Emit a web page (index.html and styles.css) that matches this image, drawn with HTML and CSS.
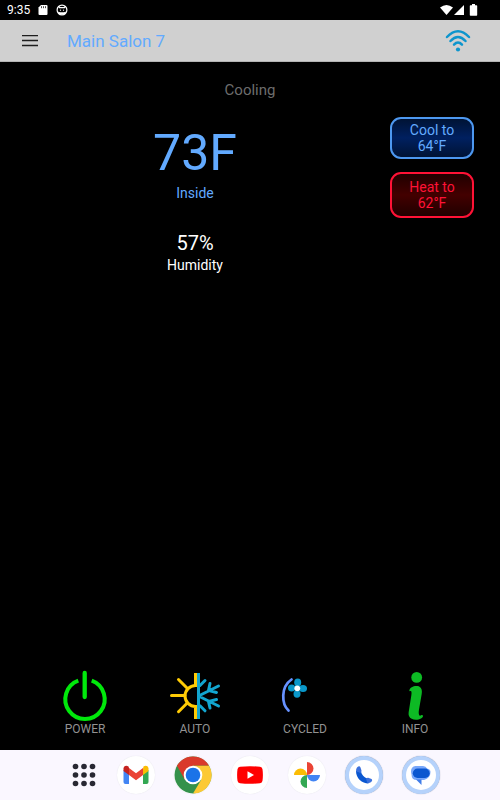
FILE: index.html
```html
<!DOCTYPE html>
<html lang="en">
<head>
<meta charset="utf-8">
<meta name="viewport" content="width=device-width, initial-scale=1">
<title>Main Salon 7</title>
<link rel="stylesheet" href="styles.css">
</head>
<body>
<div class="status">
  <span class="clock">9:35</span>
  <svg width="10" height="12" viewBox="0 0 10 12" aria-hidden="true"><path d="M3 1h5.500q1 0 1 1v8q0 1-1 1h-7q-1 0-1-1V3.500z" fill="#fff"/><path d="M3.500 2.200v2M5.500 2.200v2M7.500 2.200v2" stroke="#000" stroke-width=".7"/></svg>
  <svg width="12" height="12" viewBox="0 0 12 12" aria-hidden="true"><circle cx="6" cy="6" r="4.900" fill="#000" stroke="#fff" stroke-width="1.200"/><path d="M2.500 2L4.500 3h3l2-1-.5 2.200H3zM1.500 7.500L4 8.300h4l2.500-.8L8.500 10.500h-5z" fill="#fff"/><circle cx="4.500" cy="6.200" r=".6" fill="#fff"/><circle cx="7.500" cy="6.200" r=".6" fill="#fff"/></svg>
  <svg class="system" width="38" height="12" viewBox="0 0 38 12" aria-hidden="true" fill="#fff"><path d="M0 3.500Q6.500-1.500 13 3.500L6.500 11z"/><path d="M24 1v10H14z"/><path d="M32 0h3v1.300h1.500q.7 0 .7.700v9q0 .8-.7.800h-6q-.7 0-.7-.8V2q0-.7.700-.7H32z"/></svg>
</div>
<header class="bar">
  <button class="icon-button" aria-label="Menu"><svg width="16" height="12" viewBox="0 0 16 12"><path d="M0 .6h16M0 5.500h16M0 10.500h16" stroke="#1d1d1d" stroke-width="1.300"/></svg></button>
  <h1>Main Salon 7</h1>
  <button class="icon-button network" aria-label="Network"><svg width="28" height="24" viewBox="0 0 28 24" fill="none" stroke="#0d95cd" stroke-width="2.500" stroke-linecap="round"><path d="M3 8Q14-3.500 25 8M6.500 12Q14 4 21.500 12M10 15.700Q14 11.500 18 15.700"/><circle cx="14" cy="20.500" r="2.100" fill="#0d95cd" stroke="none"/></svg></button>
</header>
<main>
  <p class="mode">Cooling</p>
  <div class="climate">
    <section class="readings">
      <p class="temperature">73F</p>
      <p class="inside">Inside</p>
      <p class="humidity">57%</p>
      <p class="caption">Humidity</p>
    </section>
    <div class="targets">
      <button class="target cool">Cool to<br>64°F</button>
      <button class="target heat">Heat to<br>62°F</button>
    </div>
  </div>
</main>
<nav class="controls">
  <button><svg width="56" height="56" viewBox="0 0 56 56" fill="none" stroke="#00e80b"><path d="M21.300 12.700a19.700 19.700 0 1 0 13.400 0" stroke-width="4"/><path d="M27.700 5v24" stroke-width="4.300" stroke-linecap="round"/></svg>POWER</button>
  <button><svg width="56" height="56" viewBox="0 0 56 56" fill="none" stroke-width="3"><g stroke="#ffcb05"><path d="M28.500 5v12.500A10.500 10.500 0 0 0 28.500 38.500V51"/><path d="M4.500 27.600H18M11.500 11.500l8.500 8.500M11.500 43.700L20 35.200" stroke-linecap="round"/></g><g stroke="#12a5cf"><path d="M31.500 5v46"/><path d="M31.500 28L51.500 18M31.500 28l20 10M33 17.500l5-5M33 37.800l5 5M43 15.500L41.500 22.500 49.500 24.500M43 40L41.500 33.500 49.500 31.500" stroke-linecap="round"/></g></svg>AUTO</button>
  <button><svg width="56" height="56" viewBox="0 0 56 56"><path d="M14.500 11.500C3.500 19 4.500 36 11.500 42.500" fill="none" stroke="#6792ff" stroke-width="2.700" stroke-linecap="round"/><g fill="#0997c9"><ellipse cx="20.700" cy="14.500" rx="3.500" ry="4"/><ellipse cx="26" cy="20.500" rx="4" ry="3.500"/><ellipse cx="20" cy="26" rx="3.500" ry="3.700"/><ellipse cx="14.700" cy="20" rx="3.700" ry="3.500"/></g><circle cx="20.300" cy="20.300" r="2.900" fill="#fff"/></svg>CYCLED</button>
  <button><svg width="56" height="56" viewBox="0 0 56 56" fill="#0dba24"><circle cx="29.700" cy="9.400" r="5.400"/><path d="M22.300 22.500C23 19 27 17.500 30.500 18c3.700.6 5 4 4.200 8L32 41.500c-.7 3.500-.2 6 1 6.300 1.200 0 1.300-1 2.500-.6 1.300.5.200 2.200-1.500 3.300-4 2.200-10.500 1.500-12-2.500-.8-2-.2-4.500.1-6.500l2.200-14c.5-2.700.2-4.500-.5-4.500-.7 0-1.300.6-1.500-.5z"/></svg>INFO</button>
</nav>
<footer class="dock">
  <a href="#" class="app grid" aria-label="All apps"><svg width="24" height="24" viewBox="0 0 24 24" fill="#282833"><circle cx="3.500" cy="3.500" r="2.800"/><circle cx="12" cy="3.500" r="2.800"/><circle cx="20.500" cy="3.500" r="2.800"/><circle cx="3.500" cy="12" r="2.800"/><circle cx="12" cy="12" r="2.800"/><circle cx="20.500" cy="12" r="2.800"/><circle cx="3.500" cy="20.500" r="2.800"/><circle cx="12" cy="20.500" r="2.800"/><circle cx="20.500" cy="20.500" r="2.800"/></svg></a>
  <a href="#" class="app" aria-label="Gmail"><svg width="26" height="20" viewBox="0 0 26 20"><path d="M.5 5v12q0 2 2 2H6V9z" fill="#4285f4"/><path d="M20 9v10h3.500q2 0 2-2V5z" fill="#34a853"/><path d="M20 3.500V10l5.500-4V3.500C25.500.7 22.500-.2 20.500 1.500z" fill="#fbbc04"/><path d="M6 10V3l7 5.200L20 3v7l-7 5.200z" fill="#ea4335"/><path d="M.5 3.500V6L6 10V3L5.500 1.500C3.500-.2.5.7.5 3.500z" fill="#c5221f"/></svg></a>
  <a href="#" class="app" aria-label="Chrome"><svg width="38" height="38" viewBox="0 0 38 38"><circle cx="19" cy="19" r="18.500" fill="#34914b"/><path d="M19 9.500h15.900A18.500 18.500 0 0 1 19 37.500l8.200-13.750z" fill="#fcc934"/><path d="M3 9.700A18.500 18.500 0 0 1 34.900 9.500H19L10.800 23.700z" fill="#d93a2b"/><circle cx="19" cy="19" r="9.300" fill="#fff"/><circle cx="19" cy="19" r="7.300" fill="#1a73e8"/></svg></a>
  <a href="#" class="app" aria-label="YouTube"><svg width="26" height="18" viewBox="0 0 26 18"><path d="M3 .7Q13-.3 23 .7q2.200.2 2.500 2.500.8 5.800 0 11.600-.3 2.300-2.500 2.500-10 1-20 0-2.200-.2-2.500-2.500-.8-5.800 0-11.600Q.8.900 3 .7z" fill="red"/><path d="M10.500 5.300v7.400L17 9z" fill="#fff"/></svg></a>
  <a href="#" class="app" aria-label="Photos"><svg width="28" height="28" viewBox="0 0 28 28"><path d="M14 1a6.500 6.500 0 0 1 0 13z" fill="#ea4335"/><path d="M27 14a6.500 6.500 0 0 1-13 0z" fill="#4285f4"/><path d="M14 27a6.500 6.500 0 0 1 0-13z" fill="#34a853"/><path d="M1 14a6.500 6.500 0 0 1 13 0z" fill="#fbbc04"/></svg></a>
  <a href="#" class="app ringed" aria-label="Phone"><svg width="20" height="20" viewBox="0 0 20 20"><path d="M2 6L7 6.500C7.500 9.500 10 12.500 13.500 13.500L14.500 18.500C8 18.500 2 13.500 2 6z" fill="#0b57d0"/><path d="M3.500 2c1.200-1 2.500-.8 3 .5l.9 2.800c.3 1-.2 2-1.200 2.800L2.100 6C2 4.300 2.500 2.800 3.500 2zM12 13.800c1-1 1.800-1.100 2.800-.8l2.200.8c1.400.6 1.500 1.800.6 2.800-1 1.100-2.400 1.600-4.100 1.600z" fill="#3a70dd"/></svg></a>
  <a href="#" class="app ringed" aria-label="Messages"><svg width="22" height="20" viewBox="0 0 22 20"><path d="M5.500 1H13q3 0 4 2.500 3.500.5 3.500 3.500 0 6-6.500 8H7Q1.500 15 1.500 9.500-.5 2 5.500 1z" fill="#78a7fa"/><path d="M6 14.500h5.500V20z" fill="#3f7ce8"/><path d="M7.500 3.500H15a4.700 4.700 0 0 1 0 9.400H7.500a4.700 4.700 0 0 1 0-9.400z" fill="#0b57d0"/></svg></a>
</footer>
</body>
</html>
```
FILE: styles.css
```css
* {
  box-sizing: border-box;
}

body {
  margin: 0;
  min-height: 100vh;
  display: flex;
  flex-direction: column;
  background: #000;
  color: #fff;
  font: 14px/16px Roboto, sans-serif;
}

h1,
p {
  margin: 0;
  font-weight: 400;
}

button {
  margin: 0;
  padding: 0;
  border: 0;
  background: none;
  color: inherit;
  font: inherit;
  cursor: pointer;
}

svg {
  display: block;
}

.status {
  height: 20px;
  display: flex;
  align-items: center;
  gap: 8px;
  padding: 0 22px 0 7px;
  font-size: 12px;
}

.system {
  margin-left: auto;
}

.bar {
  height: 42px;
  display: flex;
  align-items: center;
  padding: 0 28px 0 20px;
  background: #d0d0d0;
  border-bottom: 1px solid #b4b4b4;
}

.icon-button {
  padding: 2px;
}

.bar h1 {
  margin-left: 27px;
  color: #62aaff;
  font-size: 17px;
  line-height: 20px;
}

.network {
  margin-left: auto;
  padding: 0;
}

main {
  flex: 1;
}

.mode {
  padding-top: 18px;
  color: #6d6d6d;
  font-size: 15px;
  line-height: 20px;
  text-align: center;
}

.climate {
  display: flex;
  padding: 17px 26px 0 0;
}

.readings {
  flex: 1;
  text-align: center;
}

.temperature {
  padding-top: 6px;
  color: #62aaff;
  font-size: 50px;
  line-height: 60px;
}

.inside,
.caption {
  line-height: 20px;
}

.inside {
  color: #62aaff;
}

.humidity {
  padding-top: 28px;
  font-size: 20px;
  line-height: 24px;
}

.targets {
  display: flex;
  flex-direction: column;
  gap: 13px;
  width: 84px;
}

.target {
  padding: 3px 0;
  border: 2px solid;
  border-radius: 11px;
}

.cool {
  border-color: #4d98f0;
  color: #62aaff;
  background: linear-gradient(#001334, #002060 50%, #001334);
}

.heat {
  padding: 5px 0;
  border-color: #ff1236;
  color: #ff1236;
  background: linear-gradient(#200000, #430000 50%, #200000);
}

.controls {
  display: grid;
  grid-template-columns: repeat(4, 1fr);
  padding: 0 30px 16px;
  color: #929292;
  font-size: 12px;
  line-height: 10px;
}

.controls button {
  display: flex;
  flex-direction: column;
  align-items: center;
}

.dock {
  height: 50px;
  display: flex;
  align-items: center;
  justify-content: center;
  gap: 19px;
  padding-left: 10px;
  background: #faf7ff;
}

.app {
  width: 38px;
  height: 38px;
  display: flex;
  align-items: center;
  justify-content: center;
  border-radius: 50%;
  background: #fff;
  box-shadow: 0 0 1px #dcdce2;
}

.grid {
  width: 28px;
  background: none;
  box-shadow: none;
}

.ringed {
  border: 4px solid #b5d2fb;
  box-shadow: 0 0 1px #858ca0;
}
```
